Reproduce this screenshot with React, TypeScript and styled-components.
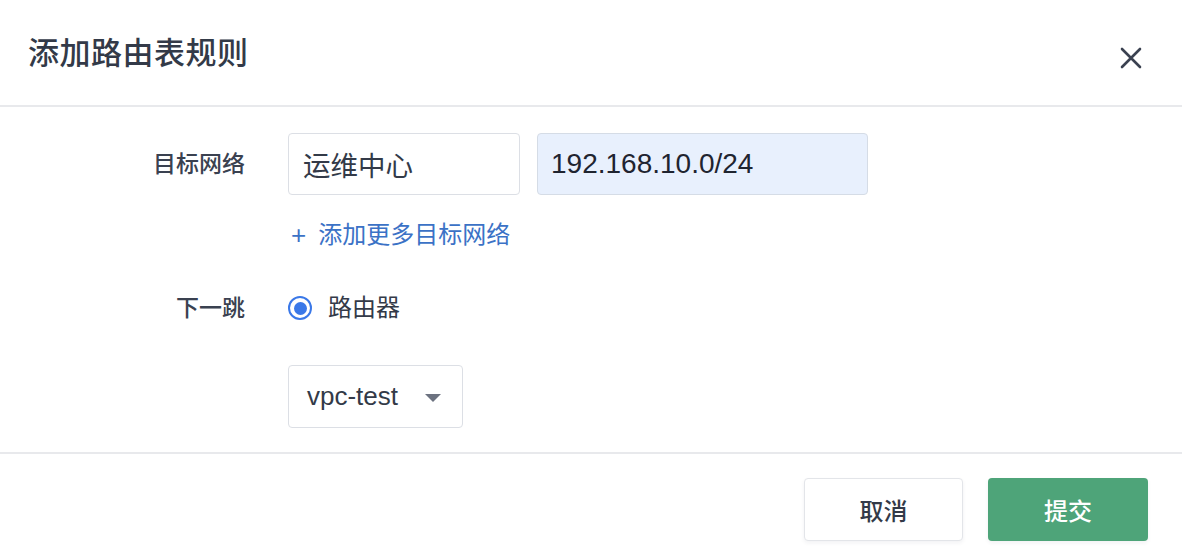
import React from "react";
import styled, { createGlobalStyle } from "styled-components";

const GlobalStyle = createGlobalStyle`
  html, body { margin: 0; padding: 0; background: #ffffff; }
  body {
    font-family: "Liberation Sans", "Noto Sans CJK SC", sans-serif;
    color: #333a48;
    -webkit-font-smoothing: antialiased;
  }
  * { box-sizing: border-box; }
`;

const Dialog = styled.div`
  width: 1182px;
  height: 556px;
  display: flex;
  flex-direction: column;
  background: #fff;
`;

const Header = styled.div`
  height: 107px;
  padding: 0 40px 0 28px;
  display: flex;
  align-items: center;
  justify-content: space-between;
  border-bottom: 2px solid #e8e9ec;
`;

const Title = styled.h1`
  margin: 2px 0 0 0;
  font-size: 31px;
  font-weight: 500;
  line-height: 40px;
  color: #333a48;
  letter-spacing: 0.5px;
`;

const CloseButton = styled.button`
  border: 0;
  background: transparent;
  padding: 0;
  margin-top: 10px;
  width: 22px;
  height: 22px;
  display: flex;
  cursor: pointer;
`;

const Body = styled.div`
  padding: 26px 0 24px 0;
  display: flex;
  flex-direction: column;
  border-bottom: 2px solid #e8e9ec;
`;

const Row = styled.div<{ $mt?: number }>`
  display: grid;
  grid-template-columns: 245px auto;
  column-gap: 43px;
  align-items: center;
  margin-top: ${(p) => p.$mt ?? 0}px;
`;

const Label = styled.div`
  text-align: right;
  font-size: 23px;
  font-weight: 500;
  line-height: 32px;
  color: #3a4150;
`;

const Fields = styled.div`
  display: flex;
  gap: 17px;
  align-items: center;
`;

const TextBox = styled.div<{ $w: number; $filled?: boolean }>`
  width: ${(p) => p.$w}px;
  height: 62px;
  display: flex;
  align-items: center;
  padding-left: ${(p) => (p.$filled ? 13 : 14)}px;
  border: 1.5px solid ${(p) => (p.$filled ? "#d5dce6" : "#dcdfe5")};
  border-radius: 4px;
  background: ${(p) => (p.$filled ? "#e8f0fd" : "#ffffff")};
  font-size: ${(p) => (p.$filled ? 28 : 27.5)}px;
  color: ${(p) => (p.$filled ? "#1f2430" : "#333a48")};
`;

const AddLink = styled.a`
  display: flex;
  align-items: center;
  gap: 12px;
  font-size: 24px;
  line-height: 32px;
  color: #3b72c6;
  text-decoration: none;
  padding-left: 3px;
  cursor: pointer;
`;

const Plus = styled.span`
  font-size: 26px;
  font-weight: 500;
  line-height: 32px;
`;

const Radio = styled.label`
  display: flex;
  align-items: center;
  gap: 16px;
  font-size: 24px;
  line-height: 32px;
  color: #333a48;
`;

const RadioDot = styled.span`
  width: 24px;
  height: 24px;
  border-radius: 50%;
  border: 2.5px solid #3a78e8;
  display: flex;
  align-items: center;
  justify-content: center;
  &::after {
    content: "";
    width: 13px;
    height: 13px;
    border-radius: 50%;
    background: #3a78e8;
  }
`;

const Select = styled.div`
  width: 175px;
  height: 63px;
  display: flex;
  align-items: center;
  justify-content: space-between;
  padding: 0 21px 0 18px;
  border: 1.5px solid #dcdfe5;
  border-radius: 4px;
  font-size: 26px;
  color: #333a48;
`;

const Caret = styled.span`
  width: 0;
  height: 0;
  border-left: 8px solid transparent;
  border-right: 8px solid transparent;
  border-top: 8px solid #6c7280;
  margin-top: 2px;
`;

const Footer = styled.div`
  padding: 24px 34px 0 0;
  display: flex;
  justify-content: flex-end;
  gap: 25px;
`;

const Button = styled.button<{ $primary?: boolean }>`
  width: ${(p) => (p.$primary ? 160 : 159)}px;
  height: 63px;
  border-radius: 4px;
  font-family: inherit;
  font-size: 24px;
  font-weight: 500;
  cursor: pointer;
  border: ${(p) => (p.$primary ? "0" : "1.5px solid #e3e5e9")};
  background: ${(p) => (p.$primary ? "#4ea479" : "#ffffff")};
  color: ${(p) => (p.$primary ? "#ffffff" : "#333a48")};
  box-shadow: 0 2px 4px rgba(30, 40, 60, 0.06);
`;

export default function App() {
  return (
    <>
      <GlobalStyle />
      <Dialog>
        <Header>
          <Title>添加路由表规则</Title>
          <CloseButton aria-label="关闭">
            <svg width="22" height="22" viewBox="0 0 22 22">
              <path
                d="M2 2 L20 20 M20 2 L2 20"
                stroke="#3a4150"
                strokeWidth="2.6"
                strokeLinecap="round"
              />
            </svg>
          </CloseButton>
        </Header>
        <Body>
          <Row>
            <Label>目标网络</Label>
            <Fields>
              <TextBox $w={232}>运维中心</TextBox>
              <TextBox $w={331} $filled>
                192.168.10.0/24
              </TextBox>
            </Fields>
          </Row>
          <Row $mt={24}>
            <span />
            <AddLink>
              <Plus>+</Plus>
              <span>添加更多目标网络</span>
            </AddLink>
          </Row>
          <Row $mt={41}>
            <Label>下一跳</Label>
            <Radio>
              <RadioDot />
              <span>路由器</span>
            </Radio>
          </Row>
          <Row $mt={41}>
            <span />
            <Select>
              <span>vpc-test</span>
              <Caret />
            </Select>
          </Row>
        </Body>
        <Footer>
          <Button>取消</Button>
          <Button $primary>提交</Button>
        </Footer>
      </Dialog>
    </>
  );
}
